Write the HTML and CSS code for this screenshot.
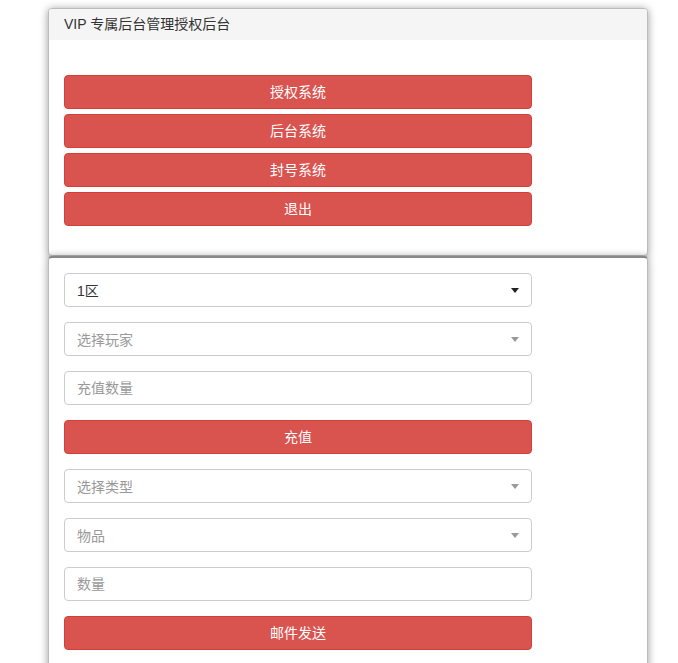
FILE: index.html
```html
<!DOCTYPE html>
<html lang="zh">
<head>
<meta charset="utf-8">
<title>VIP 专属后台管理授权后台</title>
<link rel="stylesheet" href="styles.css">
</head>
<body>
<div class="wrap">
  <div class="panel panel-top">
    <div class="panel-heading">VIP 专属后台管理授权后台</div>
    <div class="panel-body body-top">
      <div class="col">
        <button class="btn">授权系统</button>
        <button class="btn">后台系统</button>
        <button class="btn">封号系统</button>
        <button class="btn">退出</button>
      </div>
    </div>
  </div>
  <div class="panel panel-main">
    <div class="panel-body">
      <div class="col form">
        <div class="select"><span class="val">1区</span><span class="arrow dark"></span></div>
        <div class="select"><span class="ph">选择玩家</span><span class="arrow"></span></div>
        <input class="field" type="text" placeholder="充值数量">
        <button class="btn">充值</button>
        <div class="select"><span class="ph">选择类型</span><span class="arrow"></span></div>
        <div class="select"><span class="ph">物品</span><span class="arrow"></span></div>
        <input class="field" type="text" placeholder="数量">
        <button class="btn">邮件发送</button>
      </div>
    </div>
  </div>
</div>
</body>
</html>
```
FILE: styles.css
```css
* { box-sizing: border-box; }
html, body { margin: 0; padding: 0; background: #fff; }
body {
  font-family: "Liberation Sans", "Noto Sans CJK SC", sans-serif;
  font-size: 14px;
  color: #333;
  overflow: hidden;
}
.wrap {
  width: 600px;
  margin: 8px 0 0 48px;
}
.panel {
  background: #fff;
  border: 1px solid #bbb;
  border-radius: 4px;
  box-shadow: 0 1px 9px rgba(0, 0, 0, 0.4);
}
.panel-top { height: 248px; }
.panel-main {
  border-top: 2px solid #888;
  height: 460px;
}
.panel-heading {
  background: #f5f5f5;
  height: 31px;
  padding: 0 15px;
  line-height: 30px;
  border-top-left-radius: 3px;
  border-top-right-radius: 3px;
  color: #333;
}
.panel-body { padding: 15px; }
.body-top { padding-top: 35px; }
.col {
  width: 468px;
  display: flex;
  flex-direction: column;
  gap: 5px;
}
.form { gap: 15px; }
.btn {
  display: block;
  width: 100%;
  height: 34px;
  margin: 0;
  padding: 0;
  background: #d9534f;
  border: 1px solid #d43f3a;
  border-radius: 4px;
  color: #fff;
  font-family: inherit;
  font-size: 14px;
  line-height: 32px;
  text-align: center;
}
.select, .field {
  display: flex;
  align-items: center;
  justify-content: space-between;
  width: 100%;
  height: 34px;
  padding: 0 12px;
  border: 1px solid #ccc;
  border-radius: 4px;
  background: #fff;
  font-family: inherit;
  font-size: 14px;
  color: #333;
  outline: none;
}
.field::placeholder { color: #999; }
.ph { color: #999; }
.val { color: #333; }
.arrow {
  width: 0;
  height: 0;
  border-style: solid;
  border-width: 5px 4px 0 4px;
  border-color: #999 transparent transparent transparent;
}
.arrow.dark { border-top-color: #222; }
```
